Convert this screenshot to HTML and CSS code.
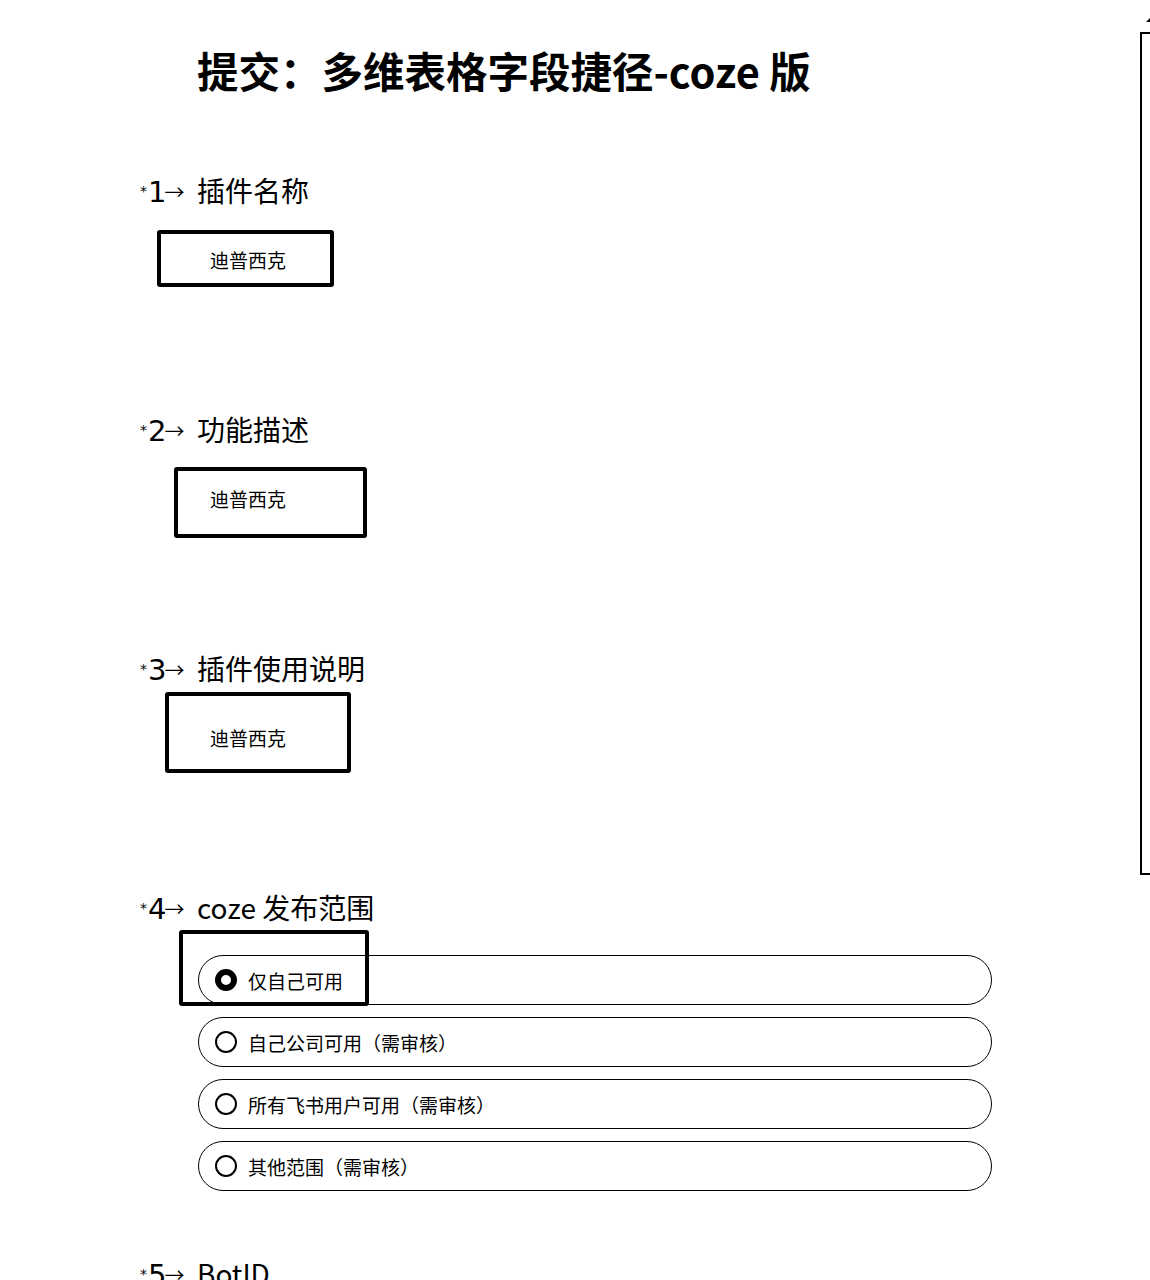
FILE: index.html
```html
<!DOCTYPE html>
<html lang="zh">
<head>
<meta charset="utf-8">
<title>提交：多维表格字段捷径-coze 版</title>
<link rel="stylesheet" href="styles.css">
</head>
<body>
<div class="side-frame"><span class="side-tick"></span></div>
<main class="page">
  <h1 class="title">提交：多维表格字段捷径-coze 版</h1>

  <section class="field s1">
    <div class="label"><span class="prefix"><span class="star">*</span><span class="num">1</span><span class="arrow">→</span></span><span class="text">插件名称</span></div>
    <div class="box box1"><span class="val">迪普西克</span></div>
  </section>

  <section class="field s2">
    <div class="label"><span class="prefix"><span class="star">*</span><span class="num">2</span><span class="arrow">→</span></span><span class="text">功能描述</span></div>
    <div class="box box2"><span class="val">迪普西克</span></div>
  </section>

  <section class="field s3">
    <div class="label"><span class="prefix"><span class="star">*</span><span class="num">3</span><span class="arrow">→</span></span><span class="text">插件使用说明</span></div>
    <div class="box box3"><span class="val">迪普西克</span></div>
  </section>

  <section class="field s4">
    <div class="label"><span class="prefix"><span class="star">*</span><span class="num">4</span><span class="arrow">→</span></span><span class="text">coze 发布范围</span></div>
    <div class="options">
      <div class="highlight"></div>
      <div class="option"><span class="radio checked"></span><span class="opt-text">仅自己可用</span></div>
      <div class="option"><span class="radio"></span><span class="opt-text">自己公司可用（需审核）</span></div>
      <div class="option"><span class="radio"></span><span class="opt-text">所有飞书用户可用（需审核）</span></div>
      <div class="option"><span class="radio"></span><span class="opt-text">其他范围（需审核）</span></div>
    </div>
  </section>

  <section class="field s5">
    <div class="label"><span class="prefix"><span class="star">*</span><span class="num">5</span><span class="arrow">→</span></span><span class="text">BotID</span></div>
  </section>
</main>
</body>
</html>
```
FILE: styles.css
```css
html, body {
  margin: 0;
  padding: 0;
  background: #fff;
  color: #000;
}
body {
  width: 1150px;
  height: 1280px;
  overflow: hidden;
  position: relative;
  font-family: "Noto Sans CJK SC", "Noto Sans", sans-serif;
}
.page {
  padding-top: 46px;
}
.title {
  margin: 0 0 0 197px;
  font-size: 41.5px;
  line-height: 48px;
  font-weight: 700;
  letter-spacing: 0;
}
.field {
  margin-left: 140px;
}
.label {
  display: flex;
  align-items: baseline;
  height: 28px;
  line-height: 28px;
  font-size: 28px;
  white-space: nowrap;
}
.prefix {
  display: inline-flex;
  align-items: baseline;
  width: 57px;
  flex: none;
  overflow: visible;
  font-family: "DejaVu Sans", sans-serif;
}
.label .star {
  font-size: 14px;
  position: relative;
  top: -6px;
  margin-right: 1px;
}
.label .num {
  font-size: 29px;
  letter-spacing: -2px;
}
.label .arrow {
  font-family: "Noto Sans CJK SC", sans-serif;
  font-size: 20px;
  position: relative;
  top: -2px;
}
.s1 { margin-top: 82px; }
.s2 { margin-top: 128px; }
.s3 { margin-top: 116px; }
.s4 { margin-top: 120px; }
.s5 { margin-top: 68px; }

.box {
  box-sizing: border-box;
  border: 4px solid #000;
  border-radius: 3px;
  display: flex;
  align-items: center;
  font-size: 19px;
  line-height: 22px;
}
.box1 {
  margin: 26px 0 0 17px;
  width: 177px;
  height: 57px;
  padding: 3px 0 0 49px;
}
.box2 {
  margin: 24px 0 0 34px;
  width: 193px;
  height: 71px;
  padding: 0 0 7px 32px;
}
.box3 {
  margin: 10px 0 0 25px;
  width: 186px;
  height: 81px;
  padding: 11px 0 0 41px;
}

.options {
  position: relative;
  margin: 34px 0 0 58px;
  width: 794px;
  display: flex;
  flex-direction: column;
  gap: 12px;
}
.option {
  box-sizing: border-box;
  height: 50px;
  border: 1px solid #000;
  border-radius: 25px;
  display: flex;
  align-items: center;
  padding-left: 16px;
  font-size: 19px;
}
.radio {
  box-sizing: border-box;
  width: 22px;
  height: 22px;
  border: 2px solid #000;
  border-radius: 50%;
  margin-right: 11px;
  flex: none;
}
.radio.checked {
  border-width: 6px;
}
.highlight {
  position: absolute;
  left: -19px;
  top: -25px;
  width: 190px;
  height: 76px;
  box-sizing: border-box;
  border: 4px solid #000;
  border-radius: 3px;
  z-index: 2;
  pointer-events: none;
}

.side-frame {
  position: absolute;
  left: 1140px;
  top: 32px;
  width: 20px;
  height: 843px;
  box-sizing: border-box;
  border: 2px solid #000;
}
.side-tick {
  position: absolute;
  left: 4px;
  top: -16px;
  width: 0;
  height: 0;
  border-left: 4px solid transparent;
  border-bottom: 4px solid #000;
}
```
